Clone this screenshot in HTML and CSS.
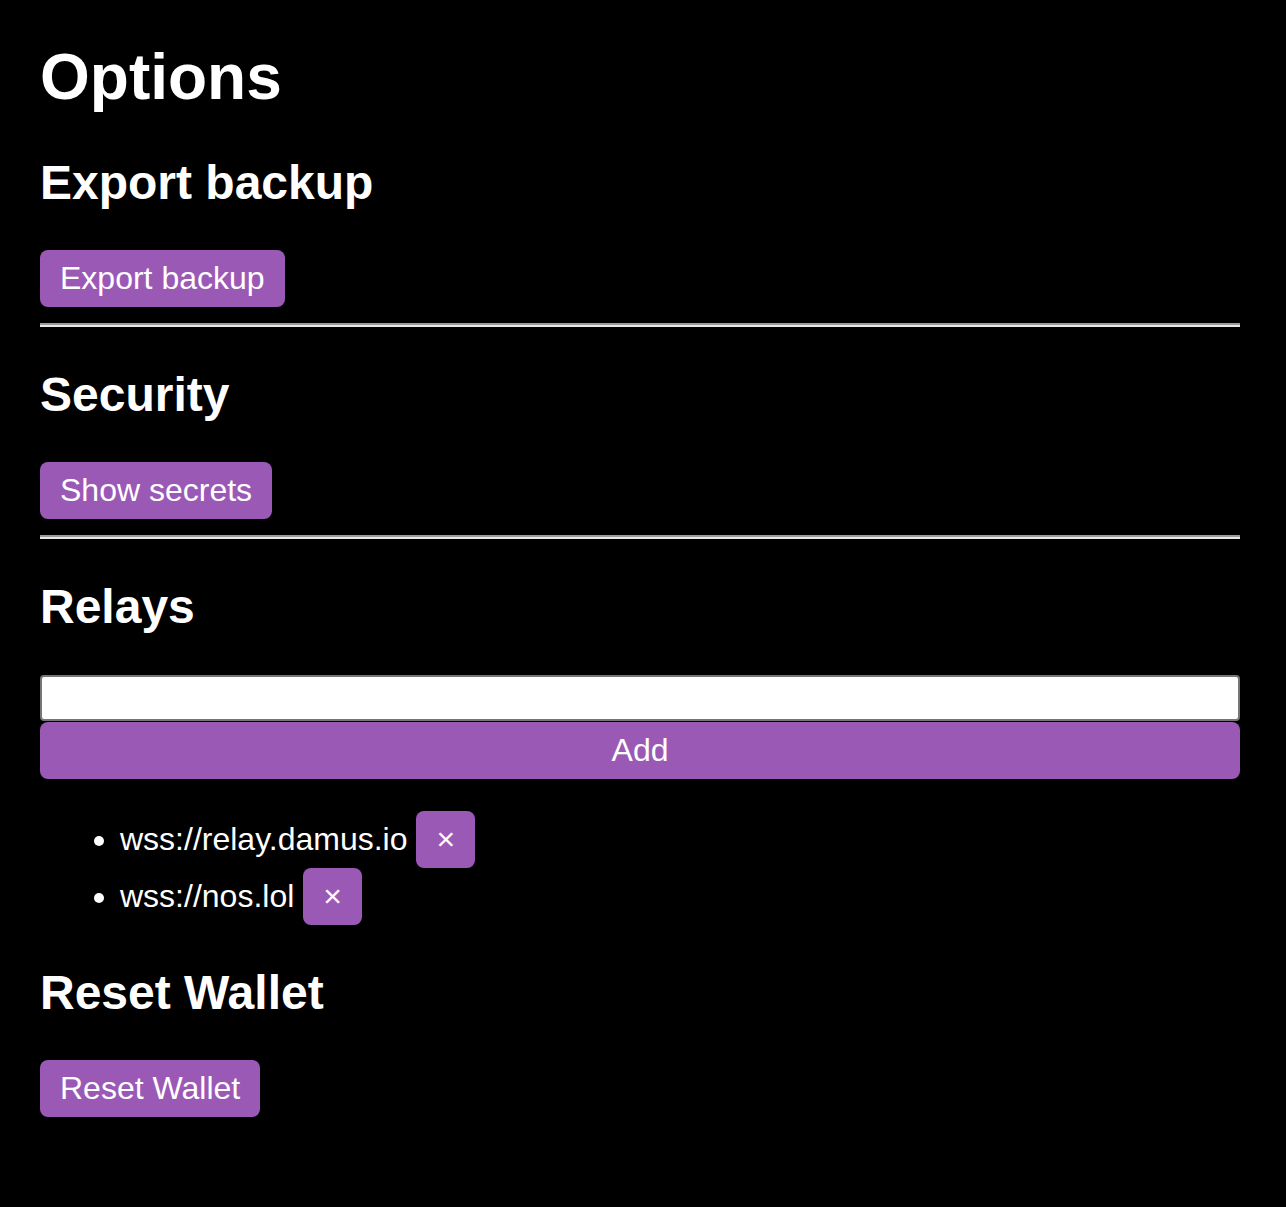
FILE: index.html
```html
<!DOCTYPE html>
<html lang="en">
<head>
<meta charset="utf-8">
<title>Options</title>
<link rel="stylesheet" href="styles.css">
</head>
<body>
<main class="page">
  <h1 class="title">Options</h1>

  <section class="section">
    <h2 class="section-title">Export backup</h2>
    <div class="actions"><button class="btn" type="button">Export backup</button></div>
  </section>
  <hr class="divider">

  <section class="section">
    <h2 class="section-title">Security</h2>
    <div class="actions"><button class="btn" type="button">Show secrets</button></div>
  </section>
  <hr class="divider">

  <section class="section">
    <h2 class="section-title">Relays</h2>
    <form class="relay-form">
      <input class="relay-input" type="text">
      <button class="btn btn-block" type="button">Add</button>
    </form>
    <ul class="relay-list">
      <li class="relay-item">wss://relay.damus.io <button class="btn btn-remove" type="button">×</button></li>
      <li class="relay-item">wss://nos.lol <button class="btn btn-remove" type="button">×</button></li>
    </ul>
  </section>

  <section class="section">
    <h2 class="section-title">Reset Wallet</h2>
    <div class="actions"><button class="btn" type="button">Reset Wallet</button></div>
  </section>
</main>
</body>
</html>
```

FILE: styles.css
```css
html, body {
  margin: 0;
  padding: 0;
  background: #000;
}

body {
  color: #fff;
  font-family: "Liberation Sans", Arial, sans-serif;
  font-size: 32px;
  line-height: normal;
}

.page {
  width: 1200px;
  padding: 40px;
}

.title {
  font-size: 64px;
  font-weight: bold;
  line-height: normal;
  margin: 0 0 41px;
}

.section-title {
  font-size: 48px;
  font-weight: bold;
  line-height: normal;
  margin: 40px 0 40px;
}

.actions {
  display: flex;
}

.btn {
  font-family: "Liberation Sans", Arial, sans-serif;
  font-size: 32px;
  line-height: normal;
  color: #fff;
  background: #9b59b6;
  border: none;
  border-radius: 8px;
  padding: 10px 20px;
  margin: 0;
  cursor: pointer;
}

.divider {
  margin: 16px 0;
  height: 0;
  border: none;
  border-top: 2px solid #9a9a9a;
  border-bottom: 2px solid #e8e8e8;
}

.relay-form {
  margin: 0;
  padding-top: 1px;
}

.relay-input {
  display: block;
  box-sizing: border-box;
  width: 100%;
  height: 46px;
  margin: 0;
  padding: 2px 4px;
  border: 2px solid #767676;
  border-radius: 4px;
  background: #fff;
  font-family: "Liberation Sans", Arial, sans-serif;
  font-size: 32px;
}

.btn-block {
  display: block;
  width: 100%;
  margin-top: 1px;
  text-align: center;
}

.relay-list {
  margin: 32px 0;
  padding-left: 80px;
}

.relay-item {
  line-height: normal;
}

.btn-remove {
  vertical-align: baseline;
}
```
